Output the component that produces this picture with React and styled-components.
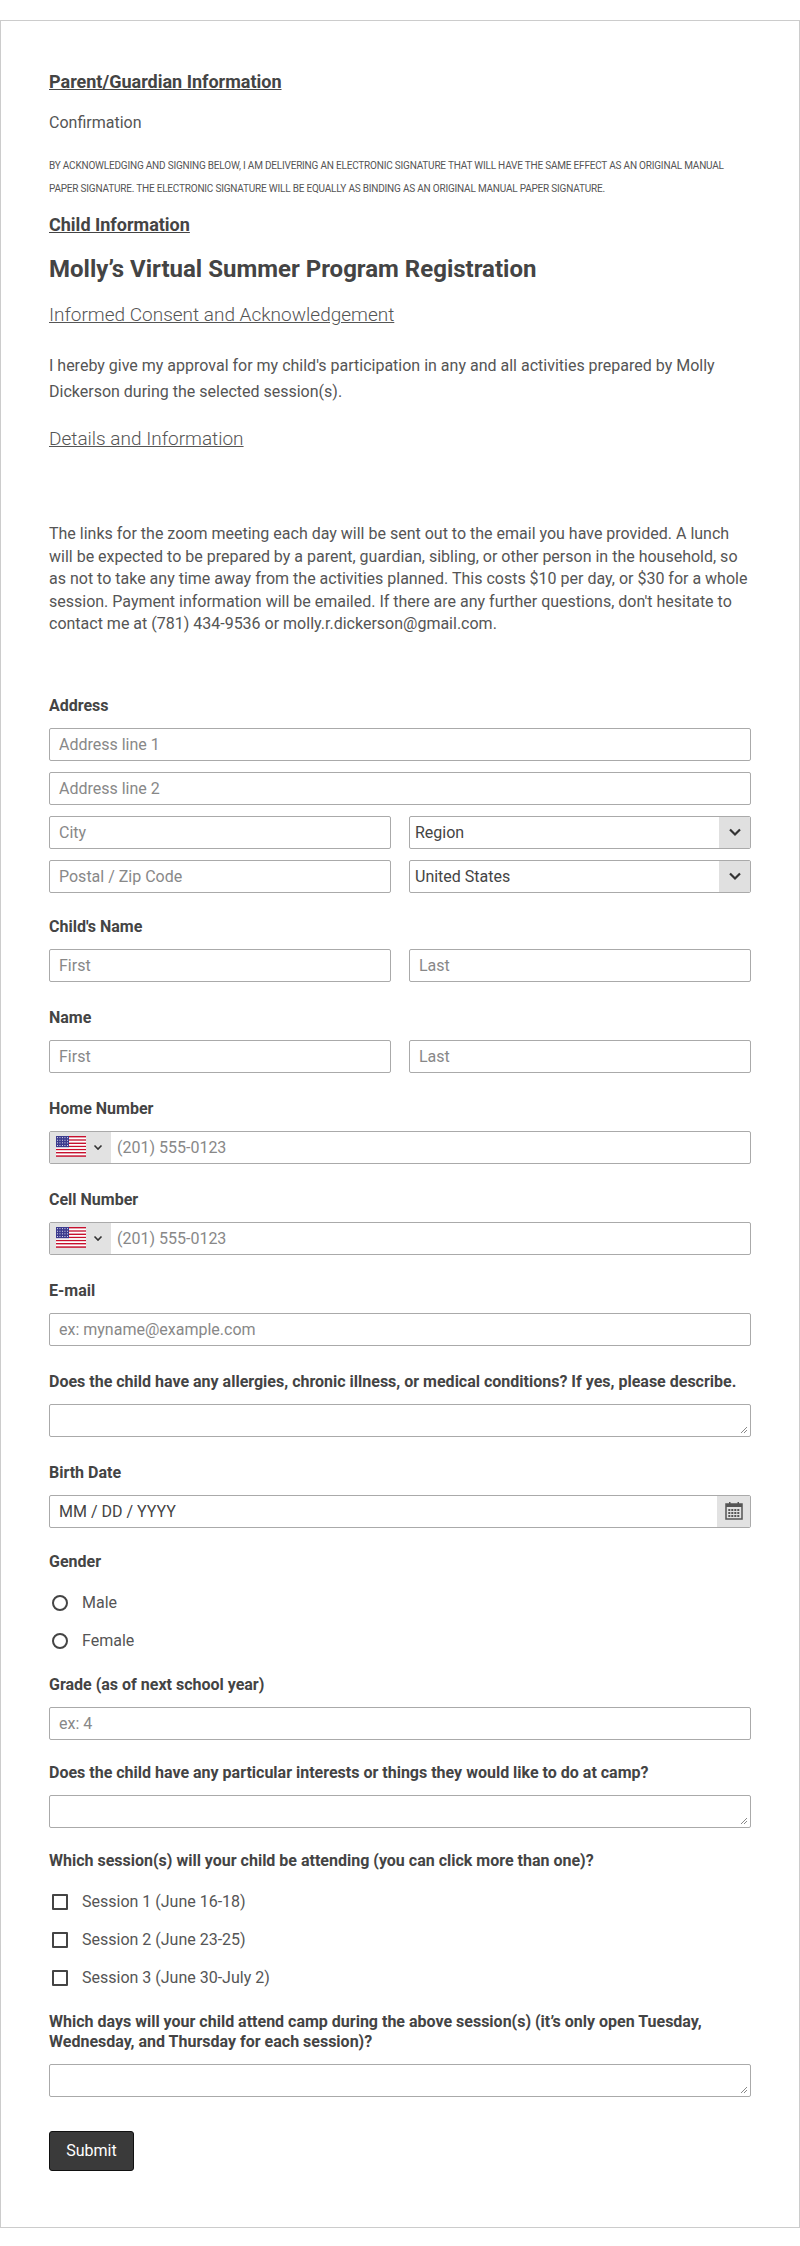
import React from "react";
import styled, { createGlobalStyle } from "styled-components";

const Global = createGlobalStyle`
  html, body { margin: 0; padding: 0; background: #fff; }
  body { font-family: Roboto, "Liberation Sans", Arial, sans-serif; color: #555; }
  * { box-sizing: border-box; }
`;

const Page = styled.div`padding-top: 20px;`;
const Card = styled.div`
  border: 1px solid #ccc;
  padding: 28px 48px 48px 48px;
  display: flex; flex-direction: column;
`;
const SectionHead = styled.div`
  font-size: 18px; font-weight: 700; color: #444; text-decoration: underline;
  line-height: 22px; margin: ${p => p.$m || "0"};
`;
const Text = styled.div`
  font-size: ${p => p.$size || 16}px; line-height: ${p => p.$lh || 22}px;
  color: #555; margin: ${p => p.$m || "0"};
`;
const Fine = styled.div`
  font-size: 10px; line-height: 23px; color: #555; margin-top: 20px; letter-spacing: -0.2px;
`;
const Title = styled.h1`
  font-size: 24px; font-weight: 700; color: #444; margin: 17px 0 0; line-height: 32px;
`;
const Sub = styled.div`
  font-size: 19px; font-weight: 300; color: #555; text-decoration: underline;
  line-height: 26px; margin: ${p => p.$m};
`;
const Field = styled.div`display: flex; flex-direction: column; margin-top: ${p => p.$mt ?? 26}px;`;
const Label = styled.div`
  font-size: 16px; font-weight: 700; color: #444; line-height: 20px; margin-bottom: ${p => p.$mb ?? 12}px;
`;
const Row = styled.div`display: grid; grid-template-columns: 1fr 1fr; gap: 18px; margin-top: ${p => p.$mt || 0}px;`;
const Input = styled.div`
  height: 33px; border: 1px solid #aaa; border-radius: 2px; display: flex; align-items: center;
  padding-left: 9px; font-size: 16px; color: ${p => p.$dark ? "#444" : "#888"};
  margin-top: ${p => p.$mt || 0}px; background: #fff; position: relative; overflow: hidden;
`;
const SelectBox = styled(Input)`padding-left: 5px; color: #444; justify-content: space-between; padding-right: 0;`;
const Caret = styled.div`
  width: 31px; height: 100%; background: #e0e0e0; display: flex; align-items: center; justify-content: center;
`;
const Country = styled.div`
  width: 61px; height: 100%; background: #e2e2e2; display: flex; align-items: center; gap: 7px; padding-left: 6px;
  margin-left: -9px; margin-right: 6px;
`;
const TextArea = styled(Input)``;
const Grip = styled.svg`position: absolute; right: 2px; bottom: 2px;`;
const CalBtn = styled.div`
  position: absolute; right: 0; top: 0; bottom: 0; width: 33px; background: #e2e2e2;
  display: flex; align-items: center; justify-content: center;
`;
const Option = styled.div`
  display: flex; align-items: center; gap: 14px; height: 38px; font-size: 16px; color: #555; padding-left: 3px;
`;
const Radio = styled.span`width: 16px; height: 16px; border: 2px solid #444; border-radius: 50%;`;
const Check = styled.span`width: 16px; height: 16px; border: 2px solid #444; border-radius: 1px;`;
const Submit = styled.button`
  align-self: flex-start; width: 85px; height: 40px; margin-top: 34px; background: #3a3a3a; color: #fff;
  border: 1px solid #111; border-radius: 3px; font-family: inherit; font-size: 16px;
`;

const Chevron = () => (
  <svg width="16" height="16" viewBox="0 0 16 16"><path d="M3 5.5l5 5 5-5" fill="none" stroke="#333" strokeWidth="2.2"/></svg>
);
const Flag = () => (
  <svg width="30" height="22" viewBox="0 0 30 22">
    {Array.from({ length: 7 }).map((_, i) => (
      <rect key={i} x="0" y={i * 3.2} width="30" height="1.6" fill="#c8102e" />
    ))}
    {Array.from({ length: 6 }).map((_, i) => (
      <rect key={"w" + i} x="0" y={i * 3.2 + 1.6} width="30" height="1.6" fill="#fff" />
    ))}
    <rect x="0" y="0" width="13" height="11.2" fill="#3c3b8e" />
    {Array.from({ length: 4 }).map((_, r) => Array.from({ length: 5 }).map((_, c) => (
      <rect key={r + "-" + c} x={1 + c * 2.5} y={1.2 + r * 2.6} width="0.9" height="0.9" fill="#fff" />
    )))}
  </svg>
);
const Small = () => (
  <svg width="10" height="10" viewBox="0 0 10 10"><path d="M1.5 3.5L5 7l3.5-3.5" fill="none" stroke="#333" strokeWidth="1.6"/></svg>
);
const Phone = () => (
  <Input>
    <Country><Flag /><Small /></Country>(201) 555-0123
  </Input>
);
const Area = () => (
  <TextArea>
    <Grip width="8" height="8" viewBox="0 0 8 8"><path d="M7 1L1 7M7 4L4 7" stroke="#888" strokeWidth="1"/></Grip>
  </TextArea>
);

export default function App() {
  return (
    <Page>
      <Global />
      <Card>
        <SectionHead $m="22px 0 0">Parent/Guardian Information</SectionHead>
        <Text $m="19px 0 0">Confirmation</Text>
        <Fine>
          BY ACKNOWLEDGING AND SIGNING BELOW, I AM DELIVERING AN ELECTRONIC SIGNATURE THAT WILL HAVE THE SAME EFFECT AS AN ORIGINAL MANUAL PAPER SIGNATURE. THE ELECTRONIC SIGNATURE WILL BE EQUALLY AS BINDING AS AN ORIGINAL MANUAL PAPER SIGNATURE.
        </Fine>
        <SectionHead $m="14px 0 0">Child Information</SectionHead>
        <Title>Molly’s Virtual Summer Program Registration</Title>
        <Sub $m="17px 0 0">Informed Consent and Acknowledgement</Sub>
        <Text $lh={26} $m="25px 0 0">
          I hereby give my approval for my child's participation in any and all activities prepared by Molly Dickerson during the selected session(s).
        </Text>
        <Sub $m="21px 0 0">Details and Information</Sub>
        <Text $lh={22.5} $m="71px 0 0">
          The links for the zoom meeting each day will be sent out to the email you have provided. A lunch will be expected to be prepared by a parent, guardian, sibling, or other person in the household, so as not to take any time away from the activities planned. This costs $10 per day, or $30 for a whole session. Payment information will be emailed. If there are any further questions, don't hesitate to contact me at (781) 434-9536 or molly.r.dickerson@gmail.com.
        </Text>

        <Field $mt={60}>
          <Label>Address</Label>
          <Input>Address line 1</Input>
          <Input $mt={11}>Address line 2</Input>
          <Row $mt={11}>
            <Input>City</Input>
            <SelectBox>Region<Caret><Chevron /></Caret></SelectBox>
          </Row>
          <Row $mt={11}>
            <Input>Postal / Zip Code</Input>
            <SelectBox>United States<Caret><Chevron /></Caret></SelectBox>
          </Row>
        </Field>

        <Field $mt={24}>
          <Label>Child's Name</Label>
          <Row><Input>First</Input><Input>Last</Input></Row>
        </Field>
        <Field>
          <Label>Name</Label>
          <Row><Input>First</Input><Input>Last</Input></Row>
        </Field>
        <Field>
          <Label>Home Number</Label>
          <Phone />
        </Field>
        <Field>
          <Label>Cell Number</Label>
          <Phone />
        </Field>
        <Field>
          <Label>E-mail</Label>
          <Input>ex: myname@example.com</Input>
        </Field>
        <Field>
          <Label>Does the child have any allergies, chronic illness, or medical conditions? If yes, please describe.</Label>
          <Area />
        </Field>
        <Field>
          <Label>Birth Date</Label>
          <Input $dark>
            MM / DD / YYYY
            <CalBtn>
              <svg width="20" height="20" viewBox="0 0 20 20">
                <rect x="2" y="3" width="16" height="15" fill="none" stroke="#555" strokeWidth="1.5"/>
                <rect x="2" y="3" width="16" height="3" fill="#555"/>
                <rect x="5" y="1" width="1.5" height="3" fill="#555"/>
                <rect x="13.5" y="1" width="1.5" height="3" fill="#555"/>
                {[0,1,2].map(r => [0,1,2,3].map(c => (
                  <rect key={r+"-"+c} x={4.3 + c * 3} y={8 + r * 3} width="2" height="2" fill="#555"/>
                )))}
              </svg>
            </CalBtn>
          </Input>
        </Field>
        <Field $mt={24}>
          <Label $mb={12}>Gender</Label>
          <Option><Radio />Male</Option>
          <Option><Radio />Female</Option>
        </Field>
        <Field $mt={15}>
          <Label>Grade (as of next school year)</Label>
          <Input>ex: 4</Input>
        </Field>
        <Field $mt={23}>
          <Label>Does the child have any particular interests or things they would like to do at camp?</Label>
          <Area />
        </Field>
        <Field $mt={23}>
          <Label $mb={12}>Which session(s) will your child be attending (you can click more than one)?</Label>
          <Option><Check />Session 1 (June 16-18)</Option>
          <Option><Check />Session 2 (June 23-25)</Option>
          <Option><Check />Session 3 (June 30-July 2)</Option>
        </Field>
        <Field $mt={15}>
          <Label>Which days will your child attend camp during the above session(s) (it’s only open Tuesday, Wednesday, and Thursday for each session)?</Label>
          <Area />
        </Field>
        <Submit>Submit</Submit>
        <div style={{ height: 8 }} />
      </Card>
    </Page>
  );
}
